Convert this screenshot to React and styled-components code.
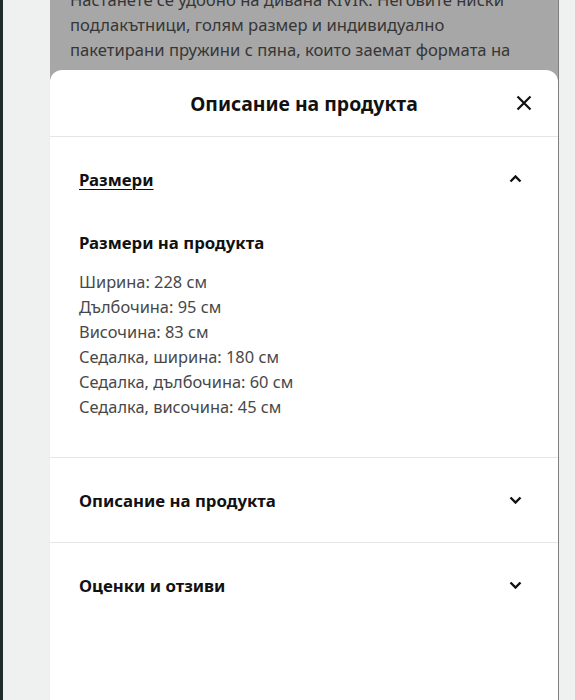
import React from 'react'
import styled, { createGlobalStyle } from 'styled-components'

const GlobalStyle = createGlobalStyle`
  html, body {
    margin: 0;
    padding: 0;
    background: #eef1f0;
    font-family: "Noto Sans", "Open Sans", sans-serif;
  }
`

const Page = styled.div`
  display: flex;
  height: 700px;
  overflow: hidden;
  background: #eef1f0;
`

const EdgeStrip = styled.div`
  width: 3px;
  flex-shrink: 0;
  background: #1f2b2b;
`

const Gutter = styled.div`
  width: ${(p) => p.$width}px;
  flex-shrink: 0;
`

const Column = styled.div`
  width: 508px;
  flex-shrink: 0;
  display: flex;
  flex-direction: column;
  background: #a7a7a7;
  border-right: 1px solid #7d8080;
`

const Backdrop = styled.div`
  height: 70px;
  overflow: hidden;
  padding-left: 20px;
  flex-shrink: 0;
`

const BackdropText = styled.p`
  margin: -13px 0 0;
  font-size: 16.6px;
  line-height: 25px;
  color: #363636;
  white-space: nowrap;
`

const Sheet = styled.div`
  flex: 1;
  background: #ffffff;
  border-radius: 12px 12px 0 0;
  display: flex;
  flex-direction: column;
`

const SheetHeader = styled.div`
  height: 66px;
  display: flex;
  align-items: center;
  justify-content: center;
  position: relative;
  border-bottom: 1px solid #e6e6e6;
`

const SheetTitle = styled.h2`
  margin: 0;
  font-size: 19.4px;
  font-weight: 700;
  color: #111111;
`

const CloseButton = styled.button`
  position: absolute;
  right: 24px;
  top: 50%;
  transform: translateY(-50%);
  width: 20px;
  height: 20px;
  padding: 0;
  border: 0;
  background: none;
  display: flex;
  align-items: center;
  justify-content: center;
`

const Section = styled.section`
  border-bottom: 1px solid #e6e6e6;
`

const SectionHeader = styled.div`
  height: 84px;
  display: flex;
  align-items: center;
  justify-content: space-between;
  padding: 0 36px 0 29px;
`

const SectionTitle = styled.span`
  font-size: 16.8px;
  font-weight: 700;
  color: #111111;
  text-decoration: ${(p) => (p.$open ? 'underline' : 'none')};
  text-underline-offset: 3px;
  text-decoration-thickness: 1px;
`

const SectionBody = styled.div`
  padding: 10px 29px 38px;
`

const BodyTitle = styled.h3`
  margin: 0 0 14px;
  font-size: 16.8px;
  line-height: 24px;
  font-weight: 700;
  color: #111111;
`

const DimensionList = styled.ul`
  list-style: none;
  margin: 0;
  padding: 0;
`

const DimensionItem = styled.li`
  font-size: 16.4px;
  line-height: 25px;
  color: #484848;
`

const Chevron = ({ up }) => (
  <svg width="13" height="8" viewBox="0 0 13 8">
    <path
      d={up ? 'M1.5 6.5 L6.5 1.5 L11.5 6.5' : 'M1.5 1.5 L6.5 6.5 L11.5 1.5'}
      fill="none"
      stroke="#111"
      strokeWidth="2.4"
    />
  </svg>
)

const CloseIcon = () => (
  <svg width="16" height="16" viewBox="0 0 16 16">
    <path d="M1.5 1.5 L14.5 14.5 M14.5 1.5 L1.5 14.5" stroke="#111" strokeWidth="2.2" />
  </svg>
)

const dimensions = [
  'Ширина: 228 см',
  'Дълбочина: 95 см',
  'Височина: 83 см',
  'Седалка, ширина: 180 см',
  'Седалка, дълбочина: 60 см',
  'Седалка, височина: 45 см',
]

const App = () => {
  return (
    <>
      <GlobalStyle />
      <Page>
        <EdgeStrip />
        <Gutter $width={47} />
        <Column>
          <Backdrop>
            <BackdropText>
              Настанете се удобно на дивана KIVIK. Неговите ниски
              <br />
              подлакътници, голям размер и индивидуално
              <br />
              пакетирани пружини с пяна, които заемат формата на
            </BackdropText>
          </Backdrop>
          <Sheet>
            <SheetHeader>
              <SheetTitle>Описание на продукта</SheetTitle>
              <CloseButton aria-label="Затвори">
                <CloseIcon />
              </CloseButton>
            </SheetHeader>
            <Section>
              <SectionHeader>
                <SectionTitle $open>Размери</SectionTitle>
                <Chevron up />
              </SectionHeader>
              <SectionBody>
                <BodyTitle>Размери на продукта</BodyTitle>
                <DimensionList>
                  {dimensions.map((d) => (
                    <DimensionItem key={d}>{d}</DimensionItem>
                  ))}
                </DimensionList>
              </SectionBody>
            </Section>
            <Section>
              <SectionHeader>
                <SectionTitle>Описание на продукта</SectionTitle>
                <Chevron />
              </SectionHeader>
            </Section>
            <SectionHeader>
              <SectionTitle>Оценки и отзиви</SectionTitle>
              <Chevron />
            </SectionHeader>
          </Sheet>
        </Column>
      </Page>
    </>
  )
}

export default App
